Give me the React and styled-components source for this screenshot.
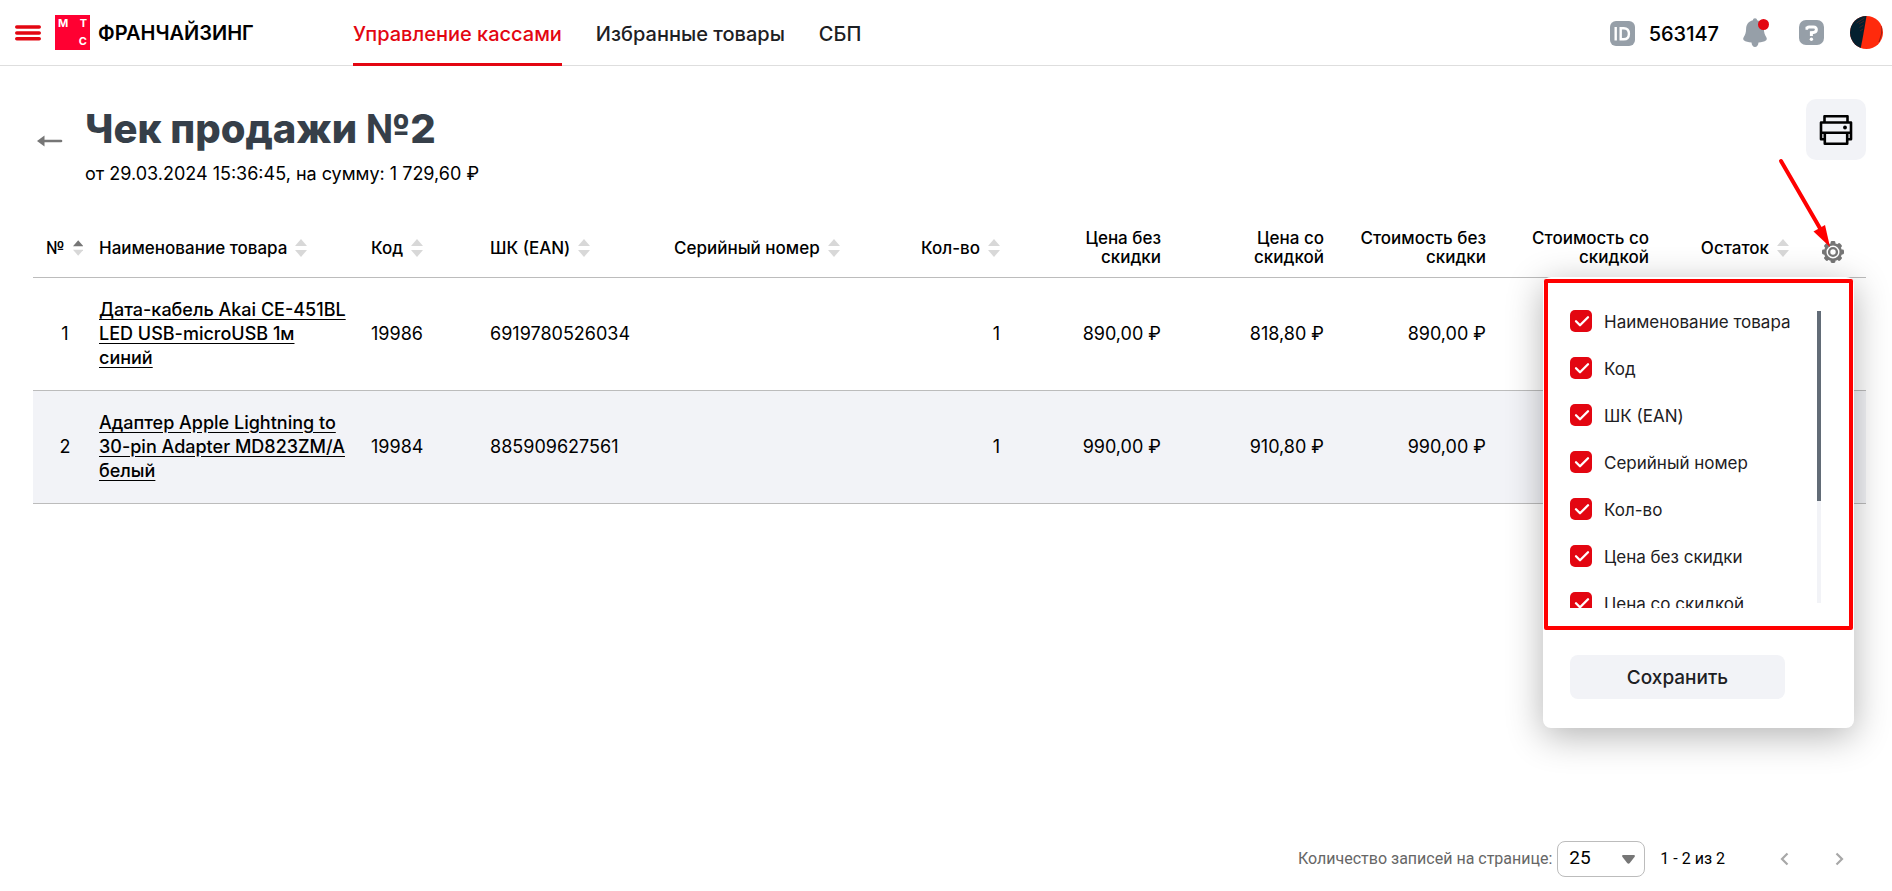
import React from 'react';
import styled, { createGlobalStyle, css } from 'styled-components';

const GlobalStyle = createGlobalStyle`
  *, *::before, *::after { box-sizing: border-box; }
  body {
    margin: 0;
    background: #fff;
    color: #000;
    font-family: Inter, Roboto, sans-serif;
  }
  button, input, select { font: inherit; color: inherit; }
`;

const Page = styled.div`
  display: flex;
  flex-direction: column;
  min-height: 100vh;
`;

/* ---------- top bar ---------- */

const TopBar = styled.header`
  display: flex;
  align-items: stretch;
  height: 66px;
  padding: 0 9px 0 15px;
  border-bottom: 1px solid #dedede;
`;

const IconButton = styled.button`
  display: flex;
  align-items: center;
  justify-content: center;
  padding: 0;
  border: 0;
  background: none;
  cursor: pointer;
`;

const Brand = styled.a`
  display: flex;
  align-items: center;
  gap: 8px;
  width: 298px;
  margin-left: 14px;
  color: #000;
  text-decoration: none;
`;

const Logo = styled.span`
  display: grid;
  grid-template: 1fr 1fr / 1fr 1fr;
  width: 35px;
  height: 35px;
  padding: 0 3px;
  background: #ff0032;
  color: #fff;
  font: 700 11px/16px Inter, sans-serif;
`;

const LogoLetter = styled.span`
  grid-area: ${(p) => p.$area};
  justify-self: ${(p) => (p.$end ? 'end' : 'start')};
`;

const BrandName = styled.span`
  font-size: 20px;
  font-weight: 600;
  line-height: 24px;
`;

const Nav = styled.nav`
  display: flex;
  gap: 34px;
`;

const NavLink = styled.a`
  display: flex;
  align-items: center;
  height: 66px;
  border-bottom: 3px solid ${(p) => (p.$active ? '#e30611' : 'transparent')};
  padding-top: 5px;
  color: ${(p) => (p.$active ? '#e30611' : '#1d2023')};
  font-size: 20px;
  font-weight: 500;
  text-decoration: none;
`;

const Account = styled.div`
  display: flex;
  align-items: center;
  margin-left: auto;
`;

const AccountId = styled.span`
  display: flex;
  align-items: center;
  gap: 14px;
  margin-right: 24px;
  padding-top: 2px;
  font-size: 20px;
  font-weight: 500;
`;

const HeaderButton = styled(IconButton)`
  margin-right: ${(p) => p.$gap}px;
`;

/* ---------- heading ---------- */

const Content = styled.main`
  padding: 33px 26px 0 33px;
`;

const Heading = styled.div`
  display: flex;
  align-items: flex-start;
  height: 118px;
`;

const BackButton = styled(IconButton)`
  width: 33px;
  margin: 36px 19px 0 0;
`;

const Titles = styled.div`
  flex: 1;
`;

const Title = styled.h1`
  margin: 6px 0 9px;
  color: #363f49;
  font-size: 40px;
  font-weight: 800;
  line-height: 48px;
`;

const Subtitle = styled.p`
  margin: 0;
  font-size: 18px;
  line-height: 24px;
`;

const PrintButton = styled(IconButton)`
  width: 60px;
  height: 61px;
  border-radius: 10px;
  background: #f2f3f7;
`;

/* ---------- table ---------- */

const Table = styled.table`
  width: 100%;
  table-layout: fixed;
  border-collapse: collapse;
`;

const Col = styled.col`
  width: ${(p) => p.$width}px;
`;

const HeadCell = styled.th`
  position: relative;
  height: 60px;
  padding: ${(p) => (p.$sorted ? '3px 8px 0 13px' : '3px 8px 0')};
  border-bottom: 1px solid #bcbcbc;
  font-size: 17px;
  font-weight: 500;
  line-height: 19px;
  text-align: ${(p) => (p.$right ? 'right' : 'left')};
  vertical-align: middle;
`;

const SortButton = styled.button`
  display: flex;
  align-items: center;
  justify-content: ${(p) => (p.$right ? 'flex-end' : 'flex-start')};
  gap: 8px;
  width: 100%;
  padding: 0;
  border: 0;
  background: none;
  font-weight: 500;
  white-space: nowrap;
  cursor: pointer;
`;

const GearButton = styled(IconButton)`
  width: 100%;
  padding: 8px 0 0 2px;
`;

const BodyRow = styled.tr`
  background: ${(p) => (p.$striped ? '#f2f3f7' : 'transparent')};
`;

const Cell = styled.td`
  padding: ${(p) => (p.$name ? '20px 14px 20px 8px' : '20px 8px')};
  border-bottom: 1px solid #bcbcbc;
  font-size: 18px;
  line-height: 24px;
  ${(p) => p.$right && css`text-align: right;`}
  ${(p) => p.$center && css`
    padding-left: 14px;
    text-align: center;
  `}
`;

const ProductLink = styled.a`
  color: #000;
  font-weight: 500;
  text-decoration: underline;
  text-underline-offset: 3px;
`;

/* ---------- column picker ---------- */

const Picker = styled.form`
  position: absolute;
  z-index: 2;
  top: 60px;
  right: 12px;
  width: 311px;
  height: 451px;
  padding: 33px 27px 29px;
  border-radius: 8px;
  background: #fff;
  box-shadow: 0 8px 36px rgba(0, 0, 0, 0.3);
  text-align: left;
`;

const PickerScroll = styled.div`
  display: flex;
  justify-content: space-between;
  height: 298px;
  padding-right: 6px;
  overflow: hidden;
`;

const OptionList = styled.ul`
  display: flex;
  flex-direction: column;
  gap: 25px;
  margin: 0;
  padding: 0;
  list-style: none;
`;

const Option = styled.li`
  flex: none;
  height: 22px;
`;

const OptionLabel = styled.label`
  display: flex;
  gap: 12px;
  color: #1d2023;
  font-size: 17px;
  font-weight: 400;
  line-height: 25px;
  white-space: nowrap;
`;

const CheckMark = styled.span`
  position: relative;
  width: 22px;
  height: 22px;

  input {
    display: block;
    width: 22px;
    height: 22px;
    margin: 0;
    border-radius: 5px;
    background: #e30611;
    appearance: none;
  }
  svg {
    position: absolute;
    inset: 0;
    pointer-events: none;
  }
`;

const ScrollTrack = styled.div`
  width: 4px;
  height: 292px;
  margin-top: 1px;
  background: #f2f3f7;
`;

const ScrollThumb = styled.div`
  height: 190px;
  background: #626c77;
`;

const SaveButton = styled.button`
  width: 215px;
  height: 44px;
  margin-top: 47px;
  border: 0;
  border-radius: 8px;
  background: #f2f3f7;
  color: #1d2023;
  font-size: 19px;
  font-weight: 500;
  cursor: pointer;
`;

const Highlight = styled.div`
  position: absolute;
  top: 2px;
  left: 1px;
  right: 1px;
  height: 351px;
  border: 4px solid #ff0000;
  border-radius: 2px;
  pointer-events: none;
`;

const Pointer = styled.svg`
  position: absolute;
  z-index: 3;
  top: -61px;
  left: -21px;
  pointer-events: none;
`;

/* ---------- pagination ---------- */

const Pagination = styled.footer`
  display: flex;
  align-items: center;
  justify-content: flex-end;
  margin-top: auto;
  padding: 0 41px 14px 0;
  font: 400 16px/20px Roboto, sans-serif;
`;

const PageSizeLabel = styled.label`
  display: flex;
  align-items: center;
  gap: 5px;
  color: #666;
`;

const SelectBox = styled.span`
  position: relative;
  display: flex;
  align-items: center;

  select {
    width: 88px;
    height: 36px;
    padding: 0 11px 2px;
    border: 1px solid #bcbcbc;
    border-radius: 8px;
    background: #fff;
    color: #000;
    font-size: 19px;
    appearance: none;
  }
  svg {
    position: absolute;
    right: 10px;
    pointer-events: none;
  }
`;

const Range = styled.span`
  margin: 0 47px 0 15px;
`;

const PageButton = styled(IconButton)`
  width: 24px;
  height: 24px;
  & + & { margin-left: 31px; }
`;

/* ---------- icons ---------- */

const BurgerIcon = () => (
  <svg width="26" height="16" viewBox="0 0 26 16" stroke="#e30611" strokeWidth="3.6" strokeLinecap="round">
    <path d="M1.8 2h22.4M1.8 8h22.4M1.8 13.8h22.4" />
  </svg>
);

const IdIcon = () => (
  <svg width="25" height="25" viewBox="0 0 25 25" fill="none" stroke="#fff" strokeWidth="2.4">
    <rect width="25" height="25" rx="6" fill="#969fa8" stroke="none" />
    <path d="M5.7 6v13.5M10.7 7.2h3c3.4 0 5.2 1.8 5.2 5.5s-1.800 5.600-5.200 5.600h-3z" />
  </svg>
);

const BellIcon = () => (
  <svg width="28" height="31" viewBox="0 0 28 31">
    <path
      d="M12 1.200c1.300 0 2 .9 2.100 2.100 4.400 1 6.600 4.200 6.800 8.700.1 3.600.8 5.900 2.300 8 .8 1.200.8 2.500 0 3.200-1.800 1.400-4.500 2-7.700 2.300-.3 2.800-1.500 4.500-3.500 4.500s-3.200-1.700-3.500-4.500c-3.200-.3-5.900-.9-7.700-2.300-.8-.7-.8-2 0-3.200 1.500-2.100 2.200-4.400 2.300-8 .2-4.500 2.400-7.700 6.800-8.700.1-1.200.8-2.100 2.100-2.100z"
      fill="#969fa8"
    />
    <circle cx="20.500" cy="7.500" r="5.500" fill="#e30611" />
  </svg>
);

const HelpIcon = () => (
  <svg width="25" height="25" viewBox="0 0 25 25" fill="none" stroke="#fff" strokeWidth="3">
    <rect width="25" height="25" rx="7" fill="#969fa8" stroke="none" />
    <path d="M6.500 8.200h1.500q.5-1.200 2-1.200h4.500c4 0 3.600 5.200 0 5.400l-2.100.2v3.400" />
    <circle cx="12.400" cy="19.300" r="1.700" fill="#fff" stroke="none" />
  </svg>
);

const AvatarIcon = () => (
  <svg width="33" height="33" viewBox="0 0 33 33">
    <clipPath id="avatar-clip"><circle cx="16.500" cy="16.500" r="16.500" /></clipPath>
    <g clipPath="url(#avatar-clip)">
      <rect width="33" height="33" fill="#ff2a0c" />
      <path d="M0 0h16.500l-1.500 9-2.200 12.500L10.500 33H0z" fill="#04202f" />
      <path d="M14.500 2 6.500 7M14 5l-5 3M13.500 9l-4 2.500M13 13l-3 2" stroke="#5a2523" strokeWidth=".7" />
      <path d="M32 10q.5 8-3 16" fill="none" stroke="#6b1a18" strokeWidth=".7" />
    </g>
  </svg>
);

const BackIcon = () => (
  <svg width="26" height="12" viewBox="0 0 26 12">
    <path d="M0 6 7.500.5v11z" fill="#767676" />
    <path d="M6 6h18" stroke="#767676" strokeWidth="2.600" strokeLinecap="round" />
  </svg>
);

const PrinterIcon = () => (
  <svg width="34" height="32" viewBox="0 0 34 32" fill="none" stroke="#000" strokeWidth="2.600" strokeLinejoin="round">
    <path d="M5.500 8.500V2.300h23v6.200M5.500 25.300H2V8.500h30v16.800h-3.500M2 18.700h30M5.800 18.700v11h22.400v-11" />
    <circle cx="26" cy="13.500" r="1.900" fill="#000" stroke="none" />
  </svg>
);

const SortIcon = ({ asc }) => (
  <svg width="12" height="18" viewBox="0 0 12 18">
    <path d="M0 7 6 0l6 7z" fill={asc ? '#767676' : '#d8d8d8'} />
    <path d="M0 11h12l-6 7z" fill="#d8d8d8" />
  </svg>
);

const TEETH = [0, 45, 90, 135, 180, 225, 270, 315];

const GearIcon = () => (
  <svg width="22" height="22" viewBox="0 0 22 22">
    {TEETH.map((a) => (
      <rect key={a} x="8.600" y="0" width="4.800" height="6" rx="1.400" fill="#767676" transform={`rotate(${a} 11 11)`} />
    ))}
    <circle cx="11" cy="11" r="7.800" fill="#fff" stroke="#767676" strokeWidth="2.600" />
    <circle cx="11" cy="11" r="3.900" fill="#fff" stroke="#767676" strokeWidth="2.400" />
  </svg>
);

const TickIcon = () => (
  <svg width="22" height="22" viewBox="0 0 22 22" fill="none">
    <path d="m6 11.300 4 4 8-8" stroke="#fff" strokeWidth="2.300" strokeLinecap="round" strokeLinejoin="round" />
  </svg>
);

const CaretIcon = () => (
  <svg width="13" height="9" viewBox="0 0 13 9">
    <path d="M1 0h11q1.500.4.500 2L7.800 8q-1.300 1.400-2.600 0L.5 2Q-.5.4 1 0z" fill="#767676" />
  </svg>
);

const ChevronIcon = ({ flip }) => (
  <svg width="9" height="14" viewBox="0 0 9 14" fill="none">
    <path d={flip ? 'm1.500 1.500 5.500 5.500-5.500 5.500' : 'M7.500 1.500 2 7l5.500 5.500'} stroke="#a8a8a8" strokeWidth="2.200" />
  </svg>
);

const ArrowPointer = () => (
  <Pointer width="56" height="96" viewBox="0 0 56 96" aria-hidden="true">
    <path d="M5 5 45 74" stroke="#ff0000" strokeWidth="4" strokeLinecap="round" />
    <path d="m54 91-16.500-15.500 11.500-6.500z" fill="#ff0000" />
  </Pointer>
);

/* ---------- data ---------- */

const COLUMNS = [
  { label: '№', width: 58, sort: true, asc: true },
  { label: 'Наименование товара', width: 272, sort: true },
  { label: 'Код', width: 119, sort: true },
  { label: 'ШК (EAN)', width: 184, sort: true },
  { label: 'Серийный номер', width: 182, sort: true },
  { label: 'Кол-во', width: 160, sort: true, right: true },
  { label: 'Цена без скидки', lines: ['Цена без', 'скидки'], width: 161, right: true },
  { label: 'Цена со скидкой', lines: ['Цена со', 'скидкой'], width: 163, right: true },
  { label: 'Стоимость без скидки', lines: ['Стоимость без', 'скидки'], width: 162, right: true },
  { label: 'Стоимость со скидкой', lines: ['Стоимость со', 'скидкой'], width: 163, right: true },
  { label: 'Остаток', width: 140, sort: true, right: true },
];

const ROWS = [
  { name: 'Дата-кабель Akai CE-451BL LED USB-microUSB 1м синий', code: '19986', ean: '6919780526034', qty: 1, price: '890,00 ₽', sale: '818,80 ₽', cost: '890,00 ₽' },
  { name: 'Адаптер Apple Lightning to 30-pin Adapter MD823ZM/A белый', code: '19984', ean: '885909627561', qty: 1, price: '990,00 ₽', sale: '910,80 ₽', cost: '990,00 ₽' },
];

const OPTIONS = ['Наименование товара', 'Код', 'ШК (EAN)', 'Серийный номер', 'Кол-во', 'Цена без скидки', 'Цена со скидкой'];

function ColumnPicker() {
  return (
    <Picker onSubmit={(e) => e.preventDefault()}>
      <PickerScroll>
        <OptionList>
          {OPTIONS.map((name) => (
            <Option key={name}>
              <OptionLabel>
                <CheckMark>
                  <input type="checkbox" defaultChecked />
                  <TickIcon />
                </CheckMark>
                {name}
              </OptionLabel>
            </Option>
          ))}
        </OptionList>
        <ScrollTrack><ScrollThumb /></ScrollTrack>
      </PickerScroll>
      <SaveButton type="submit">Сохранить</SaveButton>
      <Highlight />
    </Picker>
  );
}

export default function App() {
  return (
    <Page>
      <GlobalStyle />
      <TopBar>
        <IconButton type="button" aria-label="Меню"><BurgerIcon /></IconButton>
        <Brand href="#">
          <Logo>
            <LogoLetter $area="1 / 1">М</LogoLetter>
            <LogoLetter $area="1 / 2" $end>Т</LogoLetter>
            <LogoLetter $area="2 / 2" $end>С</LogoLetter>
          </Logo>
          <BrandName>ФРАНЧАЙЗИНГ</BrandName>
        </Brand>
        <Nav>
          <NavLink href="#" $active>Управление кассами</NavLink>
          <NavLink href="#">Избранные товары</NavLink>
          <NavLink href="#">СБП</NavLink>
        </Nav>
        <Account>
          <AccountId><IdIcon />563147</AccountId>
          <HeaderButton type="button" $gap={28}><BellIcon /></HeaderButton>
          <HeaderButton type="button" $gap={26}><HelpIcon /></HeaderButton>
          <HeaderButton type="button" $gap={0}><AvatarIcon /></HeaderButton>
        </Account>
      </TopBar>

      <Content>
        <Heading>
          <BackButton type="button"><BackIcon /></BackButton>
          <Titles>
            <Title>Чек продажи №2</Title>
            <Subtitle>от 29.03.2024 15:36:45, на сумму: 1 729,60 ₽</Subtitle>
          </Titles>
          <PrintButton type="button"><PrinterIcon /></PrintButton>
        </Heading>

        <Table>
          <colgroup>
            {COLUMNS.map((c) => <Col key={c.label} $width={c.width} />)}
            <Col $width={69} />
          </colgroup>
          <thead>
            <tr>
              {COLUMNS.map((c) => (
                <HeadCell key={c.label} $right={c.right} $sorted={c.asc}>
                  {c.sort ? (
                    <SortButton type="button" $right={c.right}>
                      {c.label}
                      <SortIcon asc={c.asc} />
                    </SortButton>
                  ) : (
                    <>{c.lines[0]}<br />{c.lines[1]}</>
                  )}
                </HeadCell>
              ))}
              <HeadCell>
                <GearButton type="button"><GearIcon /></GearButton>
                <ColumnPicker />
                <ArrowPointer />
              </HeadCell>
            </tr>
          </thead>
          <tbody>
            {ROWS.map((row, i) => (
              <BodyRow key={row.code} $striped={i % 2 === 1}>
                <Cell $center>{i + 1}</Cell>
                <Cell $name><ProductLink href="#">{row.name}</ProductLink></Cell>
                <Cell>{row.code}</Cell>
                <Cell>{row.ean}</Cell>
                <Cell />
                <Cell $right>{row.qty}</Cell>
                <Cell $right>{row.price}</Cell>
                <Cell $right>{row.sale}</Cell>
                <Cell $right>{row.cost}</Cell>
                <Cell />
                <Cell />
                <Cell />
              </BodyRow>
            ))}
          </tbody>
        </Table>
      </Content>

      <Pagination>
        <PageSizeLabel>
          Количество записей на странице:
          <SelectBox>
            <select defaultValue="25">
              <option>25</option>
            </select>
            <CaretIcon />
          </SelectBox>
        </PageSizeLabel>
        <Range>1 - 2 из 2</Range>
        <PageButton type="button"><ChevronIcon /></PageButton>
        <PageButton type="button"><ChevronIcon flip /></PageButton>
      </Pagination>
    </Page>
  );
}
